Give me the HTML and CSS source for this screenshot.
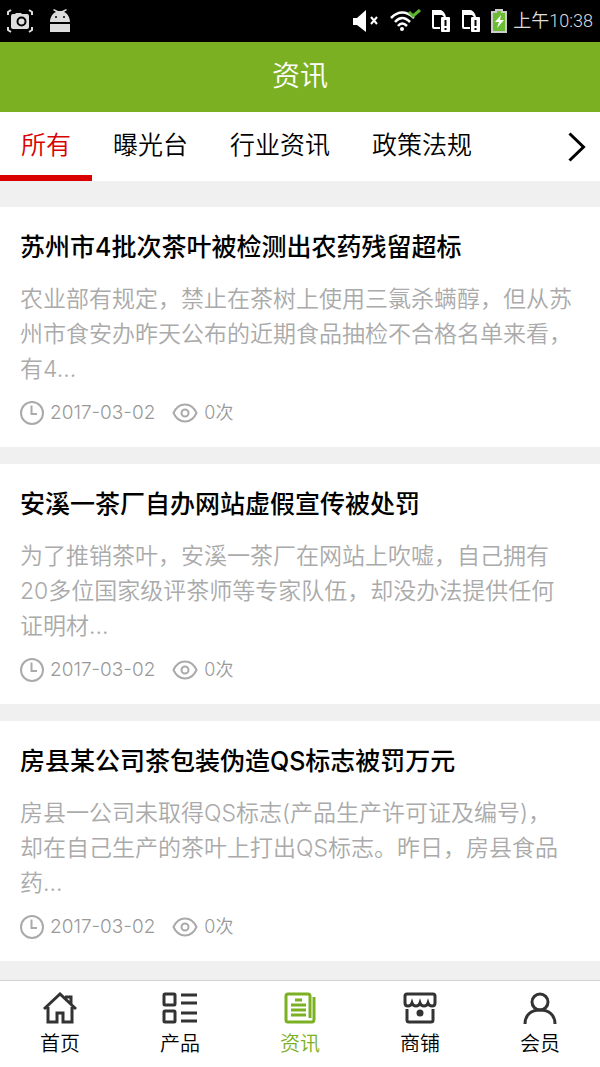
FILE: index.html
```html
<!DOCTYPE html>
<html lang="zh-CN">
<head>
    <meta charset="UTF-8">
    <meta name="viewport" content="width=device-width, initial-scale=1.0">
    <title>资讯</title>
    <link rel="stylesheet" href="styles.css">
</head>
<body>
    <!-- 图标 -->
    <svg class="sprite" aria-hidden="true">
        <symbol id="icon-clock" viewBox="0 0 24 24">
            <circle cx="12" cy="12" r="11"/>
            <path d="M11.500 4.500V13H17"/>
        </symbol>
        <symbol id="icon-eye" viewBox="0 0 26 24">
            <path d="M1.500 12C4 6.500 8 3.500 13 3.500S22 6.500 24.500 12C22 17.500 18 20.500 13 20.500S4 17.500 1.500 12Z"/>
            <circle cx="13" cy="12" r="3.500"/>
        </symbol>
        <symbol id="icon-sim" viewBox="0 0 20 24">
            <path d="M1 1H10Q14 3 15 8H13L11 6H3V18H9V20H3Q1 20 1 18Z" fill="#fff"/>
            <rect x="10" y="8" width="9" height="15" rx="1" fill="#fff"/>
            <path d="M14.500 11V17M14.500 19V21" stroke="#000" stroke-width="2" fill="none"/>
        </symbol>
    </svg>

    <!-- 状态栏 -->
    <div class="status-bar">
        <div class="status-left">
            <svg width="26" height="24" viewBox="0 0 26 24">
                <path d="M1 6V3L4 1M22 1L25 3V6M1 18V21L4 23M22 23L25 21V18" fill="none" stroke="#ddd" stroke-width="2"/>
                <path d="M6 5H8L9 4H14L15 5H20Q22 5 22 7V18Q22 20 20 20H6Q4 20 4 18V7Q4 5 6 5Z" fill="#ddd"/>
                <circle cx="14.500" cy="12.500" r="4" fill="none" stroke="#000" stroke-width="2"/>
            </svg>
            <svg width="20" height="24" viewBox="0 0 20 24">
                <path d="M0 13C0 8 3 4 6 3L3 1L4 0L8 2H12L16 0L17 1L14 3C17 4 20 8 20 13ZM0 15H20V23H0Z" fill="#ddd"/>
                <circle cx="6" cy="8" r="1" fill="#000"/>
                <circle cx="14" cy="8" r="1" fill="#000"/>
            </svg>
        </div>
        <div class="status-right">
            <svg width="26" height="24" viewBox="0 0 26 24">
                <path d="M0 9H4L13 1V23L4 16H0Z" fill="#fff"/>
                <path d="M18 8L24 15M24 8L18 15" stroke="#fff" stroke-width="2"/>
            </svg>
            <svg width="32" height="24" viewBox="0 0 32 24">
                <path d="M2 9Q13-2 25 9M6 13Q13 5 21 13M9 17Q13 12 18 17" fill="none" stroke="#fff" stroke-width="2.500"/>
                <circle cx="13" cy="20" r="2" fill="#fff"/>
                <path d="M20 3L24 7L31 1" fill="none" stroke="#5cb531" stroke-width="3"/>
            </svg>
            <svg width="20" height="24"><use href="#icon-sim"/></svg>
            <svg width="20" height="24"><use href="#icon-sim"/></svg>
            <svg width="16" height="24" viewBox="0 0 16 24">
                <path d="M5 1H11V3H15V23H1V3H5Z" fill="#6cbb35" stroke="#ccc" stroke-width="2"/>
                <path d="M10 6L4 13H8L6 19L13 11H9Z" fill="#fff"/>
            </svg>
            <span class="time">上午10:38</span>
        </div>
    </div>

    <!-- 标题栏 -->
    <header class="header">
        <h1>资讯</h1>
    </header>

    <!-- 分类 -->
    <div class="tabs">
        <a href="#" class="tab active">所有</a>
        <a href="#" class="tab">曝光台</a>
        <a href="#" class="tab">行业资讯</a>
        <a href="#" class="tab">政策法规</a>
        <button class="tab-more" aria-label="更多">
            <svg width="18" height="30" viewBox="0 0 18 30"><path d="M1.500 1.500L15.500 15L1.500 28.500"/></svg>
        </button>
    </div>

    <!-- 资讯列表 -->
    <main class="news-list">
        <article class="news">
            <h2>苏州市4批次茶叶被检测出农药残留超标</h2>
            <p>农业部有规定，禁止在茶树上使用三氯杀螨醇，但从苏<br>州市食安办昨天公布的近期食品抽检不合格名单来看，<br>有4...</p>
            <div class="meta">
                <svg width="24" height="24"><use href="#icon-clock"/></svg>
                <span class="date">2017-03-02</span>
                <svg width="26" height="24"><use href="#icon-eye"/></svg>
                <span class="views">0次</span>
            </div>
        </article>
        <article class="news">
            <h2>安溪一茶厂自办网站虚假宣传被处罚</h2>
            <p>为了推销茶叶，安溪一茶厂在网站上吹嘘，自己拥有<br>20多位国家级评茶师等专家队伍，却没办法提供任何<br>证明材...</p>
            <div class="meta">
                <svg width="24" height="24"><use href="#icon-clock"/></svg>
                <span class="date">2017-03-02</span>
                <svg width="26" height="24"><use href="#icon-eye"/></svg>
                <span class="views">0次</span>
            </div>
        </article>
        <article class="news">
            <h2>房县某公司茶包装伪造QS标志被罚万元</h2>
            <p>房县一公司未取得QS标志(产品生产许可证及编号)，<br>却在自己生产的茶叶上打出QS标志。昨日，房县食品<br>药...</p>
            <div class="meta">
                <svg width="24" height="24"><use href="#icon-clock"/></svg>
                <span class="date">2017-03-02</span>
                <svg width="26" height="24"><use href="#icon-eye"/></svg>
                <span class="views">0次</span>
            </div>
        </article>
    </main>

    <!-- 底部导航栏 -->
    <nav class="bottom-nav">
        <a href="#" class="nav-item">
            <svg width="36" height="32" viewBox="0 0 36 32">
                <path d="M2 17L18 2L34 17M6 15V30H15V21H21V30H30V15M23 5H29V12"/>
            </svg>
            <span>首页</span>
        </a>
        <a href="#" class="nav-item">
            <svg width="36" height="32" viewBox="0 0 36 32">
                <rect x="2" y="2" width="11" height="11" rx="1"/>
                <rect x="2" y="19" width="11" height="11" rx="1"/>
                <path d="M19 3H35M19 11H35M19 21H35M19 29H35"/>
            </svg>
            <span>产品</span>
        </a>
        <a href="#" class="nav-item active">
            <svg width="36" height="32" viewBox="0 0 36 32">
                <path d="M28 30H6Q4 30 4 28V4Q4 2 6 2H26Q28 2 28 4V26M28 30H30Q32 30 32 27V5M13 8H20M9 13H24M9 18H24M9 23H24"/>
            </svg>
            <span>资讯</span>
        </a>
        <a href="#" class="nav-item">
            <svg width="36" height="32" viewBox="0 0 36 32">
                <path d="M3 11V4Q3 2 5 2H31Q33 2 33 4V11Q33 14 30 14Q27 14 26 11Q25 14 22 14Q19 14 18 11Q17 14 14 14Q11 14 10 11Q9 14 6 14Q3 14 3 11ZM5 17V28Q5 30 7 30H29Q31 30 31 28V17"/>
                <circle cx="18" cy="21" r="3.500" class="dot"/>
            </svg>
            <span>商铺</span>
        </a>
        <a href="#" class="nav-item">
            <svg width="36" height="32" viewBox="0 0 36 32">
                <circle cx="18" cy="10" r="8"/>
                <path d="M3 32C3 23 9 18 18 18S33 23 33 32"/>
            </svg>
            <span>会员</span>
        </a>
    </nav>
</body>
</html>
```
FILE: styles.css
```css
* {
    box-sizing: border-box;
}

body {
    margin: 0;
    display: flex;
    flex-direction: column;
    min-height: 100vh;
    font-family: Inter, "Noto Sans CJK SC", sans-serif;
    font-weight: 350;
    background-color: #f0f0f0;
    color: #000;
}

a {
    color: inherit;
    text-decoration: none;
}

.sprite {
    display: none;
}

/* 状态栏 */
.status-bar {
    display: flex;
    justify-content: space-between;
    height: 42px;
    padding: 0 7px;
    background-color: #000;
    color: #ddd;
}

.status-left,
.status-right {
    display: flex;
    align-items: center;
}

.status-left {
    gap: 17px;
}

.status-right {
    gap: 10px;
}

.time {
    margin-left: -4px;
    font-family: Roboto, "Noto Sans CJK SC", sans-serif;
    font-size: 18px;
    line-height: 24px;
}

/* 标题栏 */
.header {
    padding: 14px 0 16px;
    background-color: #7bb022;
    color: #fff;
    text-align: center;
}

.header h1 {
    margin: 0;
    font-size: 28px;
    font-weight: 350;
    line-height: 40px;
}

/* 分类 */
.tabs {
    display: flex;
    height: 69px;
    background-color: #fff;
}

.tab {
    padding: 0 21px;
    border-bottom: 6px solid transparent;
    font-size: 25px;
    line-height: 66px;
    white-space: nowrap;
}

.tab.active {
    color: #d90000;
    border-color: #d90000;
}

.tab-more {
    display: flex;
    align-items: center;
    margin-left: auto;
    padding: 0 14px;
    border: none;
    background: none;
    cursor: pointer;
}

.tab-more svg {
    fill: none;
    stroke: #000;
    stroke-width: 3;
}

/* 资讯列表 */
.news-list {
    display: flex;
    flex-direction: column;
    flex: 1;
    gap: 17px;
    padding: 26px 0 19px;
}

.news {
    padding: 20px 20px 22px;
    background-color: #fff;
}

.news h2 {
    margin: 0 0 15px;
    font-size: 25px;
    font-weight: 500;
    line-height: 40px;
}

.news p {
    margin: 0 0 14px;
    color: #aaa;
    font-size: 23px;
    line-height: 35px;
    white-space: nowrap;
}

.meta {
    display: flex;
    align-items: center;
    color: #999;
    font-size: 18px;
    line-height: 24px;
}

.meta svg {
    fill: none;
    stroke: #aaa;
    stroke-width: 2;
}

.date {
    margin: 0 17px 0 6px;
    font-size: 19px;
}

.views {
    margin-left: 6px;
}

/* 底部导航栏 */
.bottom-nav {
    position: sticky;
    bottom: 0;
    display: flex;
    border-top: 1px solid #d2d2d2;
    background-color: #fff;
}

.nav-item {
    flex: 1;
    display: flex;
    flex-direction: column;
    align-items: center;
    gap: 5px;
    padding: 11px 0 8px;
    font-size: 20px;
    line-height: 30px;
}

.nav-item svg {
    fill: none;
    stroke: #333;
    stroke-width: 3;
}

.nav-item .dot {
    fill: #333;
    stroke: none;
}

.nav-item.active {
    color: #7bb022;
}

.nav-item.active svg {
    stroke: #7bb022;
}
```
